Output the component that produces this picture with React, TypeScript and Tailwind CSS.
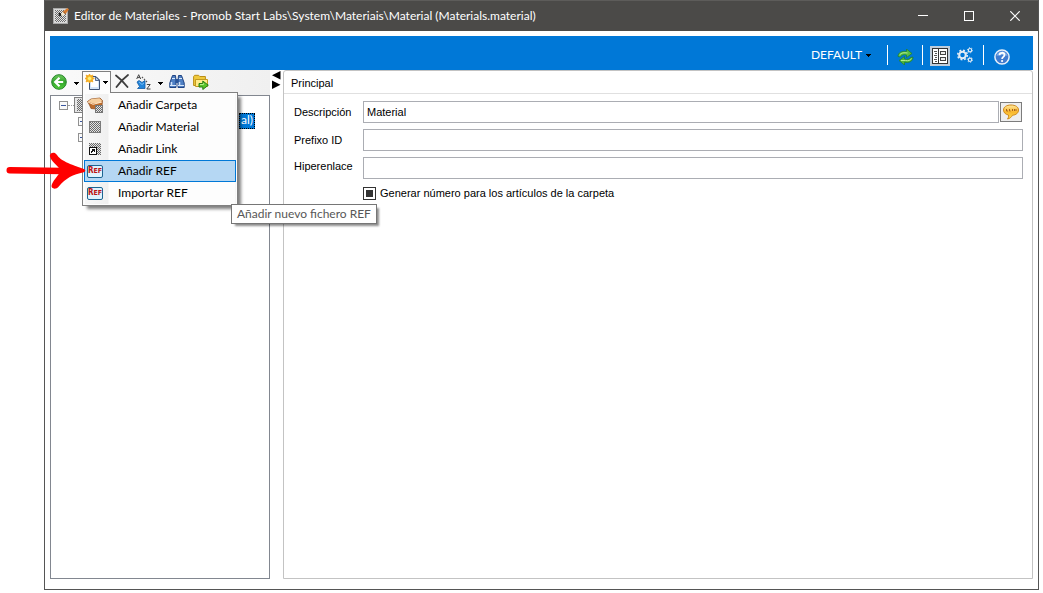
import type { ReactNode } from "react";

function Caret({ className = "" }: { className?: string }) {
  return (
    <svg className={className} width="5" height="3" viewBox="0 0 5 3" shapeRendering="crispEdges" aria-hidden="true">
      <path d="M0 0h5v1H4v1H3v1H2V2H1V1H0z" fill="currentColor" />
    </svg>
  );
}

function Checker({ id }: { id: string }) {
  return (
    <pattern id={id} width="2" height="2" patternUnits="userSpaceOnUse">
      <rect width="2" height="2" fill="#e4e4e4" />
      <rect width="1" height="1" fill="#6a6a6a" />
      <rect x="1" y="1" width="1" height="1" fill="#6a6a6a" />
    </pattern>
  );
}

function AppIcon() {
  return (
    <svg width="16" height="16" viewBox="0 0 16 16" aria-hidden="true">
      <defs><Checker id="chk-app" /></defs>
      <rect x=".5" y=".5" width="14" height="15" fill="#d9d9d9" stroke="#a9a9a9" />
      <rect x="2" y="2" width="11" height="12" fill="url(#chk-app)" />
      <path d="M8 5.500l-2-1-.5 3 3 1z" fill="#1d1d1d" />
      <path d="M8 7l2-4 3 2-3.500 3z" fill="#f3ead0" />
      <path d="M10 3.500L14.500 0 16 1.500 12.500 6z" fill="#d77a2d" />
      <path d="M10 3.500l2.500 2.500" stroke="#8a3e0c" />
    </svg>
  );
}

function RootIcon() {
  return (
    <svg width="16" height="16" viewBox="0 0 16 16" shapeRendering="crispEdges" aria-hidden="true">
      <defs><Checker id="chk-root" /></defs>
      <rect x=".5" y=".5" width="15" height="15" fill="#e6e6e6" stroke="#808080" />
      <rect x="3" y="2" width="11" height="12" fill="url(#chk-root)" />
    </svg>
  );
}

function BackIcon() {
  return (
    <svg width="16" height="16" viewBox="0 0 16 16" aria-hidden="true">
      <defs>
        <linearGradient id="back-g" x1="0" y1="0" x2="0" y2="1">
          <stop offset="0" stopColor="#6fca5c" />
          <stop offset=".5" stopColor="#32a52c" />
          <stop offset="1" stopColor="#52cc3a" />
        </linearGradient>
      </defs>
      <circle cx="8" cy="8" r="7.300" fill="url(#back-g)" stroke="#26852a" />
      <path d="M8.500 3.800L4.200 8l4.300 4.200M4.800 8h7.400" fill="none" stroke="#fff" strokeWidth="2.200" />
    </svg>
  );
}

function NewIcon() {
  return (
    <svg width="16" height="16" viewBox="0 0 16 16" aria-hidden="true">
      <path d="M4.500 2.500h6.500l3.500 3.500v9.500h-10z" fill="#d3e4f8" stroke="#3f5274" />
      <path d="M6 4h4v3h3v6H6z" fill="#fff" />
      <path d="M10.500 2.500v4h4z" fill="#b9cce6" stroke="#3f5274" strokeWidth=".8" />
      <path d="M4.500 0l1.200 2 2.200-.9-.7 2.300L9.300 4.500 7.200 5.600l.7 2.300-2.200-.8L4.500 9 3.400 7.100l-2.300.8.800-2.300L0 4.500l1.900-1.100-.8-2.300 2.300.9z" fill="#f3a81e" stroke="#f3a81e" strokeWidth=".9" />
      <circle cx="4.500" cy="4.500" r="2" fill="#fff17a" stroke="#f5c732" strokeWidth=".6" />
    </svg>
  );
}

function DeleteIcon() {
  return (
    <svg width="14" height="14" viewBox="0 0 14 14" aria-hidden="true">
      <path d="M1 1.500C5 4.500 9 8.500 12.500 13M13 1C9 4 5 8 1.500 13" fill="none" stroke="#3d3d3d" strokeWidth="1.800" strokeLinecap="round" />
    </svg>
  );
}

function SortIcon() {
  return (
    <svg width="16" height="16" viewBox="0 0 16 16" aria-hidden="true">
      <path d="M.7 5L2.700.7 4.700 5M1.500 3.600h2.400" fill="none" stroke="#444" />
      <path d="M10.800 10.500h3.400l-3.400 4.500H14.500" fill="none" stroke="#444" />
      <path d="M6 3l1 1M8 5l1 1M10 7l1 1" stroke="#555" strokeWidth="1.200" />
      <path d="M1 8l2-1.500 3 2L9 6.500V14.500H1.500l2-2z" fill="#2386dc" stroke="#135ba5" strokeWidth=".8" />
      <path d="M3 8l3 2.500L8 9" fill="none" stroke="#74bdf4" />
    </svg>
  );
}

function FindIcon() {
  return (
    <svg width="16" height="16" viewBox="0 0 16 16" aria-hidden="true">
      <path d="M3.500 1.500h3l.5 5v7H.8V9zM12.500 1.500h-3l-.5 5v7h6.200V9z" fill="#4f80c4" stroke="#1f4282" />
      <path d="M6.500 5h3v4h-3z" fill="#28559a" />
      <path d="M3 4.500h3M10 4.500h3" stroke="#d9eaff" />
      <path d="M2.500 8v4M10.500 8v4" stroke="#cfe2fb" strokeWidth="1.500" />
      <path d="M1 11.500h6M9 11.500h6" stroke="#d9e8fb" strokeWidth="1.200" />
    </svg>
  );
}

function FolderIcon() {
  return (
    <svg width="16" height="16" viewBox="0 0 16 16" aria-hidden="true">
      <path d="M.6 2.500l1-1.200h4l1.200 1.200h5.600v9H.6z" fill="#f0c93c" stroke="#b98e18" />
      <path d="M2.500 5.500h12v7h-12z" fill="#ffec8a" stroke="#c39b20" />
      <path d="M6 9.500h3.800V7L15.300 11.200l-5.500 4.300V13H6z" fill="#5ac42a" stroke="#2a7d14" />
      <path d="M7 10.500h3.600V9.200" fill="none" stroke="#b8ee8c" />
    </svg>
  );
}

function RefreshIcon() {
  return (
    <svg width="17" height="16" viewBox="0 0 17 16" aria-hidden="true">
      <path d="M1 7.500C1 3.500 5 1.800 9.500 2.500V0L15 4.500 9.500 8.500V6C6.500 5.200 4.500 6 3.500 8z" fill="#55bd45" stroke="#1d7a2c" strokeWidth=".7" />
      <path d="M16 8c0 4.500-4 6-8.500 5.300V16L2 11.500l5.500-4V10c3 .8 5 .3 6-1.500z" fill="#4eb53d" stroke="#1d7a2c" strokeWidth=".7" />
      <path d="M2.500 6c2-2.500 4.500-2.500 8-2M4 11.500h4.500c3 .5 5 0 6-2" fill="none" stroke="#b3ec8e" />
    </svg>
  );
}

function LayoutIcon() {
  return (
    <svg width="16" height="16" viewBox="0 0 16 16" shapeRendering="crispEdges" aria-hidden="true">
      <rect x=".5" y=".5" width="15" height="15" fill="#fff" stroke="#333" />
      <path d="M6.500 1v14" stroke="#333" />
      <path d="M2 3.500h3M3 5.500h2M2 7.500h3M3 9.500h2M2 11.500h3M3 13.500h2" stroke="#555" />
      <rect x="8.500" y="3.500" width="5" height="3" fill="#eee" stroke="#444" />
      <rect x="8.500" y="9.500" width="5" height="3" fill="#eee" stroke="#444" />
    </svg>
  );
}

function GearsIcon() {
  return (
    <svg width="16" height="16" viewBox="0 0 16 16" fill="none" stroke="#e3edf5" aria-hidden="true">
      <circle cx="5.500" cy="8" r="3.300" strokeWidth="2.100" />
      <circle cx="5.500" cy="8" r="4.800" strokeWidth="1.600" strokeDasharray="1.900 1.870" />
      <circle cx="13" cy="3.200" r="1.700" strokeWidth="1.200" />
      <circle cx="13" cy="3.200" r="2.600" strokeWidth=".9" strokeDasharray="1.100 1.620" />
      <circle cx="13" cy="12.800" r="1.700" strokeWidth="1.200" />
      <circle cx="13" cy="12.800" r="2.600" strokeWidth=".9" strokeDasharray="1.100 1.620" />
    </svg>
  );
}

function HelpIcon() {
  return (
    <svg width="16" height="16" viewBox="0 0 16 16" aria-hidden="true">
      <circle cx="8" cy="8" r="7.100" fill="#3f7bd0" stroke="#e7f0fa" strokeWidth="1.500" />
      <path d="M2.500 7a5.600 5.600 0 0 1 11 0q-5-2-11 0z" fill="#78a8e6" />
      <path d="M5.500 6.200c0-3.200 5-3.200 5-.2 0 1.900-2.400 1.900-2.400 3.900" fill="none" stroke="#fff" strokeWidth="1.800" />
      <circle cx="8.100" cy="12" r="1.100" fill="#fff" />
    </svg>
  );
}

function SpeechIcon() {
  return (
    <svg width="18" height="16" viewBox="0 0 18 16" aria-hidden="true">
      <defs>
        <linearGradient id="speech-g" x1="0" y1="0" x2="0" y2="1">
          <stop offset="0" stopColor="#ffe9a0" />
          <stop offset=".5" stopColor="#f9b62b" />
          <stop offset="1" stopColor="#ffe05a" />
        </linearGradient>
      </defs>
      <path d="M9 1c4.500 0 7.500 2 7.500 5s-2.500 5-6 5.200C9.500 13 8 14.500 5.500 15c1-1.200 1.300-2.500 1-4C3.500 10.500 1.500 8.500 1.500 6c0-3 3-5 7.500-5z" fill="url(#speech-g)" stroke="#cf8a1c" />
      <path d="M4.500 5v2H6M7.500 5v2H8.500M10.500 5v2M12.500 5v2M14 5v2" stroke="#a9621a" fill="none" />
    </svg>
  );
}

function FolderMaterialIcon() {
  return (
    <svg width="16" height="16" viewBox="0 0 16 16" aria-hidden="true">
      <defs><Checker id="chk-fold" /></defs>
      <path d="M.5 4.500L4 2l9-1 2.500 2.500L15 9l-6 3-5-.5L2.500 8z" fill="#bd6c2c" stroke="#8b4a1c" strokeWidth=".7" />
      <path d="M.8 4.500L4.500 2l8-.7L15 3.500 13 6l-7 .5z" fill="#f6cf9f" />
      <path d="M1 5l5 2.300L15 5" stroke="#ffe6c8" fill="none" />
      <rect x="8.500" y="8.500" width="7" height="7" fill="url(#chk-fold)" stroke="#777" />
    </svg>
  );
}

function MaterialIcon() {
  return (
    <svg width="12" height="12" viewBox="0 0 12 12" shapeRendering="crispEdges" aria-hidden="true">
      <defs><Checker id="chk-mat" /></defs>
      <rect x=".5" y=".5" width="11" height="11" fill="url(#chk-mat)" stroke="#7b7b7b" />
    </svg>
  );
}

function LinkIcon() {
  return (
    <svg width="12" height="12" viewBox="0 0 12 12" shapeRendering="crispEdges" aria-hidden="true">
      <defs><Checker id="chk-link" /></defs>
      <rect width="12" height="12" fill="url(#chk-link)" />
      <rect x=".5" y="4.500" width="7" height="7" fill="#fff" stroke="#111" />
      <path d="M3 6h3v3H5V8H4v1H3v1H2V8h1V7h0z" fill="#111" />
    </svg>
  );
}

function RefIcon() {
  return (
    <span className="flex h-[13px] w-4 items-center justify-center rounded-xs border border-[#1d6592] bg-[#e0f3fd] font-['DejaVu_Sans_Condensed','DejaVu_Sans',sans-serif] text-[7px] leading-none font-bold text-[#bd1414]">
      <span className="text-[8px]">R</span>EF
    </span>
  );
}

function MinusBox() {
  return (
    <svg width="9" height="9" viewBox="0 0 9 9" shapeRendering="crispEdges" aria-hidden="true">
      <rect x=".5" y=".5" width="8" height="8" fill="#fafafa" stroke="#919191" />
      <path d="M2 4.500h5" stroke="#3a57a0" />
    </svg>
  );
}

const menuItems: { label: string; icon: ReactNode; active?: boolean }[] = [
  { label: "Añadir Carpeta", icon: <FolderMaterialIcon /> },
  { label: "Añadir Material", icon: <MaterialIcon /> },
  { label: "Añadir Link", icon: <LinkIcon /> },
  { label: "Añadir REF", icon: <RefIcon />, active: true },
  { label: "Importar REF", icon: <RefIcon /> },
];

function AddMenu() {
  return (
    <div role="menu" className="absolute top-5 -left-px z-10 w-39 border border-[#808080] bg-[#fdfdfd] p-px shadow-[4px_4px_3px_-1px_rgba(0,0,0,0.5)]">
      <span className="absolute -top-px left-0 h-px w-[27px] bg-[#fdfdfd]" />
      {menuItems.map((item) => (
        <button
          key={item.label}
          role="menuitem"
          className={
            item.active
              ? "flex h-[22px] w-full items-center border border-[#0078d7] bg-[#b5d7f3] text-left"
              : "flex h-[22px] w-full items-center border border-transparent bg-linear-to-r from-[#f7f7f7] from-0% via-[#f0f0f0] via-[23px] to-[#fdfdfd] to-[24px] text-left"
          }
        >
          <span className="flex w-[33px] shrink-0 items-center">
            <span className="flex w-5 justify-center">{item.icon}</span>
          </span>
          {item.label}
        </button>
      ))}
      <div role="tooltip" className="absolute top-[111px] left-[148px] z-20 border border-[#767676] bg-white px-[5px] leading-[18px] whitespace-nowrap text-[#575757] shadow-[3px_3px_2px_-1px_rgba(0,0,0,0.45)]">
        Añadir nuevo fichero REF
      </div>
      <svg className="absolute top-[57px] left-[-78px] z-20" width="82" height="42" viewBox="0 0 82 42" aria-hidden="true">
        <path d="M4.800 20.300L58 21" fill="none" stroke="#f00" strokeWidth="6.600" strokeLinecap="round" />
        <path d="M44.800 6c0-3.600 5-4.600 7-1.200 3 4.700 9 8.200 27 14.200 2 .8 2 2.600 0 3.200-11 2.300-18 5.800-25 14.300-3 3.600-8 2.300-7.200-1.200 1.200-4.300 5-7.800 9.400-14.300C53 15 46 12 44.800 6z" fill="#f00" />
      </svg>
    </div>
  );
}

function TreeToolbar() {
  return (
    <div className="flex h-[25px] items-start bg-linear-to-r from-[#fafafa] to-[#f0f0f0] pl-px">
      <button aria-label="Atrás" className="mt-1"><BackIcon /></button>
      <button aria-label="Historial" className="mt-3 ml-[7px]"><Caret /></button>
      <div className="relative mt-px ml-[3px] h-[22px] w-[29px] border border-b-0 border-[#808080] bg-[#fdfdfd]">
        <button aria-label="Nuevo" aria-expanded="true" className="flex items-center gap-0.5 pt-0.5 pl-0.5">
          <NewIcon />
          <Caret />
        </button>
        <AddMenu />
      </div>
      <button aria-label="Eliminar" className="mt-1 ml-1"><DeleteIcon /></button>
      <button aria-label="Ordenar" className="mt-1 ml-[7px]"><SortIcon /></button>
      <button aria-label="Opciones de orden" className="mt-3 ml-1.5"><Caret /></button>
      <button aria-label="Buscar" className="mt-1 ml-1.5"><FindIcon /></button>
      <button aria-label="Exportar" className="mt-1 ml-2"><FolderIcon /></button>
    </div>
  );
}

function Tree() {
  return (
    <ul className="flex-1 overflow-hidden border border-[#828790] bg-white pt-px pl-2">
      <li>
        <div className="flex h-4 items-center">
          <MinusBox />
          <span className="w-1.5 border-b border-dotted border-[#999]" />
          <RootIcon />
        </div>
        <ul className="pl-[19px]">
          <li className="flex h-4 items-center">
            <MinusBox />
            <span className="mr-3.5 ml-auto h-4 bg-[#0078d7] px-0.5 leading-[14px] whitespace-nowrap text-white outline-1 -outline-offset-1 outline-dotted outline-black">
              al)
            </span>
          </li>
          <li className="flex h-4 items-center"><MinusBox /></li>
        </ul>
      </li>
    </ul>
  );
}

const inputClass = "h-[22px] min-w-0 flex-1 border border-[#abadb3] bg-white px-[3px] text-black";

function Properties() {
  return (
    <section className="min-w-0 flex-1 rounded-t-[3px] border border-[#c3c3c3] bg-white font-['Liberation_Sans',Arial,sans-serif] text-[11px] text-black">
      <h2 className="h-[23px] border-b border-[#e0e0e0] pl-[7px] leading-6">Principal</h2>
      <form className="flex flex-col gap-1.5 pt-[7px] pr-[9px] pl-2.5">
        <div className="flex items-center">
          <label htmlFor="desc" className="w-[69px]">Descripción</label>
          <input id="desc" defaultValue="Material" className={inputClass} />
          <button type="button" aria-label="Comentario" className="mr-px ml-px flex h-5 w-[22px] items-center justify-center border border-[#7c7c7c] bg-[#eee]">
            <SpeechIcon />
          </button>
        </div>
        <div className="flex items-center">
          <label htmlFor="prefix" className="w-[69px]">Prefixo ID</label>
          <input id="prefix" className={inputClass} />
        </div>
        <div className="flex items-center">
          <label htmlFor="link" className="w-[69px] pb-1">Hiperenlace</label>
          <input id="link" className={inputClass} />
        </div>
        <label className="ml-[69px] flex h-4 items-center gap-1">
          <input type="checkbox" className="size-[13px] appearance-none border border-[#333] bg-[#333] shadow-[inset_0_0_0_2px_#fff]" />
          Generar número para los artículos de la carpeta
        </label>
      </form>
    </section>
  );
}

export default function App() {
  return (
    <main className="h-screen bg-white pr-1 pb-[3px] pl-11 font-[Lato,'Open_Sans',sans-serif] text-[12px] text-black">
      <div className="flex h-full flex-col border border-t-0 border-[#555]">
        <header className="flex h-[31px] shrink-0 items-center border-t border-[#5d5c5a] bg-[#4b4a48] text-white">
          <span className="ml-2"><AppIcon /></span>
          <h1 className="ml-[5px] flex-1 whitespace-nowrap">
            Editor de Materiales - Promob Start Labs\System\Materiais\Material (Materials.material)
          </h1>
          <button aria-label="Minimizar" className="flex w-[46px] justify-center">
            <svg width="10" height="10" viewBox="0 0 10 10"><path d="M0 4.500h10" stroke="#fff" /></svg>
          </button>
          <button aria-label="Maximizar" className="flex w-[46px] justify-center">
            <svg width="10" height="10" viewBox="0 0 10 10"><rect x=".5" y=".5" width="9" height="9" fill="none" stroke="#fff" /></svg>
          </button>
          <button aria-label="Cerrar" className="flex w-[46px] justify-center">
            <svg width="10" height="10" viewBox="0 0 10 10"><path d="M.3.300l9.400 9.400M9.700.300L.300 9.700" stroke="#fff" strokeWidth="1.200" /></svg>
          </button>
        </header>
        <div className="flex min-h-0 flex-1 flex-col px-[5px] pt-[5px] pb-2.5">
          <nav className="flex h-[34px] shrink-0 items-center justify-end bg-[#0078d7] pt-1 pr-[23px] text-white">
            <button className="mr-4 flex items-center gap-1">
              DEFAULT
              <Caret className="text-black" />
            </button>
            <span className="h-5 w-px bg-white" />
            <button aria-label="Actualizar" className="mt-1 mr-2 ml-[9px]"><RefreshIcon /></button>
            <span className="h-5 w-px bg-white" />
            <button aria-label="Diseño" className="mt-0.5 ml-[7px] flex size-5 items-center justify-center bg-[#bfcddb]"><LayoutIcon /></button>
            <button aria-label="Configuración" className="mr-2.5 ml-[7px]"><GearsIcon /></button>
            <span className="h-5 w-px bg-white" />
            <button aria-label="Ayuda" className="mt-1 ml-2.5"><HelpIcon /></button>
          </nav>
          <div className="flex min-h-0 flex-1">
            <aside className="flex w-55 shrink-0 flex-col">
              <TreeToolbar />
              <Tree />
            </aside>
            <div className="w-[13px] shrink-0 pt-px pl-0.5">
              <svg width="9" height="18" viewBox="0 0 9 18" aria-hidden="true">
                <path d="M8.500 0v8.500L0 4.200zM0 9.500V18l8.500-4.300z" fill="#000" />
              </svg>
            </div>
            <Properties />
          </div>
        </div>
      </div>
    </main>
  );
}
